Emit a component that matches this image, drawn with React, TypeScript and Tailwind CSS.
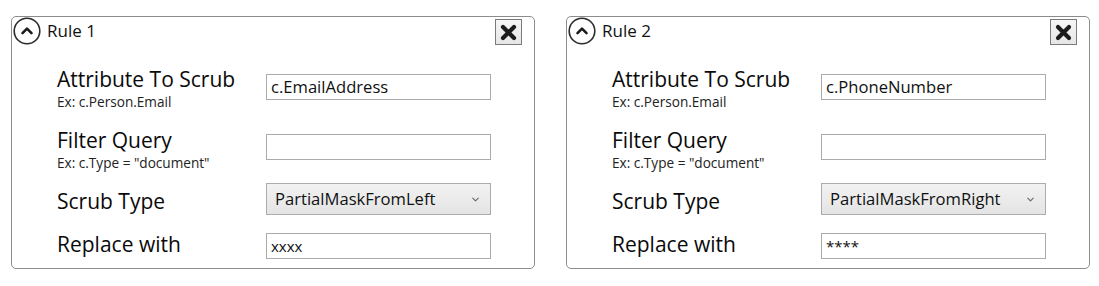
import { ChevronDown } from 'lucide-react';

interface Rule {
    title: string;
    attribute: string;
    scrubType: string;
    replaceWith: string;
}

const RULES: Rule[] = [
    { title: 'Rule 1', attribute: 'c.EmailAddress', scrubType: 'PartialMaskFromLeft', replaceWith: 'xxxx' },
    { title: 'Rule 2', attribute: 'c.PhoneNumber', scrubType: 'PartialMaskFromRight', replaceWith: '****' },
];

function CollapseIcon() {
    return (
        <svg width="28" height="28" viewBox="0 0 28 28" className="shrink-0">
            <circle cx="14" cy="14" r="12.8" fill="white" stroke="#2b2b2b" strokeWidth="1.6" />
            <path d="M9.5 16.2 L14 11.7 L18.5 16.2" fill="none" stroke="#1a1a1a" strokeWidth="2.6" strokeLinecap="round" strokeLinejoin="round" />
        </svg>
    );
}

function CloseButton() {
    return (
        <button className="w-[27px] h-[26px] border border-[#7a7a7a] bg-gradient-to-b from-[#f6f6f6] to-[#e6e6e6] flex items-center justify-center">
            <svg width="19" height="19" viewBox="0 0 19 19">
                <path d="M4 4 L15 15 M15 4 L4 15" stroke="#1c1c1c" strokeWidth="4.2" strokeLinecap="round" />
            </svg>
        </button>
    );
}

function TextBox({ value, small }: { value: string; small?: boolean }) {
    return (
        <div
            className={
                small
                    ? 'w-[225px] h-[26px] border border-[#ababab] bg-white pl-[4px] flex items-center text-[15px] text-[#111] leading-none'
                    : 'w-[225px] h-[26px] border border-[#ababab] bg-white pl-[4px] flex items-center text-[16.6px] text-[#111] leading-none'
            }
        >
            {value}
        </div>
    );
}

function RulePanel({ rule }: { rule: Rule }) {
    return (
        <div className="w-[524px] h-[253px] border border-[#8c8c8c] rounded-[5px] bg-white flex flex-col">
            {/* Header */}
            <div className="flex items-start justify-between h-[28px]">
                <div className="flex items-center ml-[1px] h-[28px]">
                    <CollapseIcon />
                    <span className="ml-[6px] text-[17px] text-[#111]">{rule.title}</span>
                </div>
                <div className="mt-[2px] mr-[12px]">
                    <CloseButton />
                </div>
            </div>

            {/* Body */}
            <div className="flex flex-col pl-[45px] text-[#0a0a0a]">
                <div className="flex items-start mt-[21px]">
                    <div className="w-[209px] flex flex-col">
                        <span className="text-[21px] leading-[26px]">Attribute To Scrub</span>
                        <span className="text-[13.6px] leading-[16px] mt-[2px] text-[#222]">Ex: c.Person.Email</span>
                    </div>
                    <div className="mt-[8px]">
                        <TextBox value={rule.attribute} />
                    </div>
                </div>

                <div className="flex items-start mt-[17px]">
                    <div className="w-[209px] flex flex-col">
                        <span className="text-[21px] leading-[26px]">Filter Query</span>
                        <span className="text-[13.6px] leading-[16px] mt-[2px] text-[#222]">Ex: c.Type = "document"</span>
                    </div>
                    <div className="mt-[7px]">
                        <TextBox value="" />
                    </div>
                </div>

                <div className="flex items-center mt-[12px] h-[32px]">
                    <span className="w-[209px] text-[21px] leading-[26px] pt-[3px]">Scrub Type</span>
                    <div className="w-[225px] h-[32px] border border-[#acacac] bg-gradient-to-b from-[#f2f2f2] to-[#e4e4e4] flex items-center justify-between pl-[8px] pr-[9px]">
                        <span className="text-[16.6px] text-[#111]">{rule.scrubType}</span>
                        <ChevronDown className="w-[11px] h-[11px] text-[#666]" strokeWidth={2.4} />
                    </div>
                </div>

                <div className="flex items-start mt-[16px]">
                    <span className="w-[209px] text-[21px] leading-[26px]">Replace with</span>
                    <div className="mt-[2px]">
                        <TextBox value={rule.replaceWith} small />
                    </div>
                </div>
            </div>
        </div>
    );
}

export default function App() {
    return (
        <div
            className="w-[1099px] h-[286px] bg-white flex gap-[31px] pl-[11px] pt-[16px]"
            style={{ fontFamily: '"Open Sans", "Noto Sans", sans-serif' }}
        >
            {RULES.map((rule) => (
                <RulePanel key={rule.title} rule={rule} />
            ))}
        </div>
    );
}
